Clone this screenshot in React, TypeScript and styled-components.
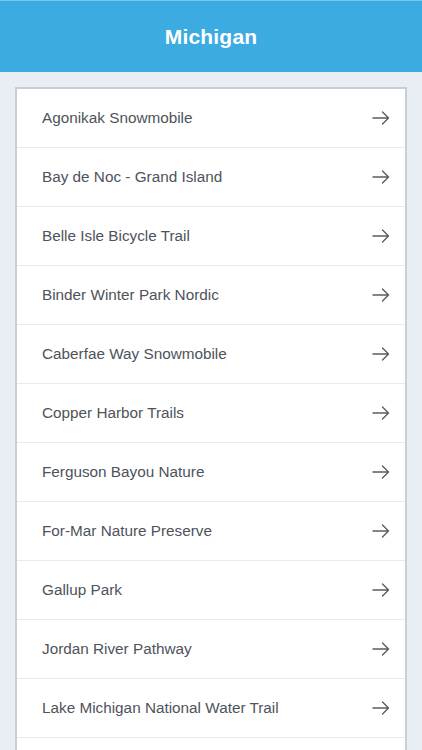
import React from 'react';
import styled, { createGlobalStyle } from 'styled-components';

const trails = [
  'Agonikak Snowmobile',
  'Bay de Noc - Grand Island',
  'Belle Isle Bicycle Trail',
  'Binder Winter Park Nordic',
  'Caberfae Way Snowmobile',
  'Copper Harbor Trails',
  'Ferguson Bayou Nature',
  'For-Mar Nature Preserve',
  'Gallup Park',
  'Jordan River Pathway',
  'Lake Michigan National Water Trail',
];

const GlobalStyle = createGlobalStyle`
  html, body {
    margin: 0;
    padding: 0;
    background: #e9eef5;
    font-family: 'Liberation Sans', Arial, sans-serif;
  }
`;

const Arrow = () => (
  <svg width="18" height="14" viewBox="0 0 18 14" fill="none">
    <path d="M1 7H16.5M10.5 1L16.5 7L10.5 13" stroke="#585d65" strokeWidth="1.4" strokeLinecap="round" strokeLinejoin="round" />
  </svg>
);

const App = () => {
  return (
    <Page>
      <GlobalStyle />
      <Header>
        <Title>Michigan</Title>
      </Header>
      <Content>
        <List>
          {trails.map((name) => (
            <Row key={name}>
              <Name>{name}</Name>
              <Arrow />
            </Row>
          ))}
        </List>
      </Content>
    </Page>
  );
};

const Page = styled.div`
  min-height: 100vh;
  background: #e9eef5;
`;

const Header = styled.header`
  height: 72px;
  background: #3babe2;
  border-top: 1px solid #7cc6ee;
  box-sizing: border-box;
  display: flex;
  align-items: center;
  justify-content: center;
`;

const Title = styled.h1`
  margin: 0;
  color: #ffffff;
  font-size: 21px;
  font-weight: bold;
  letter-spacing: 0.2px;
`;

const Content = styled.main`
  padding: 15px 15px 0;
`;

const List = styled.ul`
  list-style: none;
  margin: 0;
  padding: 0 0 40px;
  background: #ffffff;
  border: 2px solid #c9ced5;
  border-bottom: none;
`;

const Row = styled.li`
  height: 59px;
  box-sizing: border-box;
  display: flex;
  align-items: center;
  justify-content: space-between;
  padding: 0 15px 0 25px;
  border-bottom: 1px solid #e7ebf0;
`;

const Name = styled.span`
  font-size: 15.3px;
  color: #4e535b;
`;

export default App;
